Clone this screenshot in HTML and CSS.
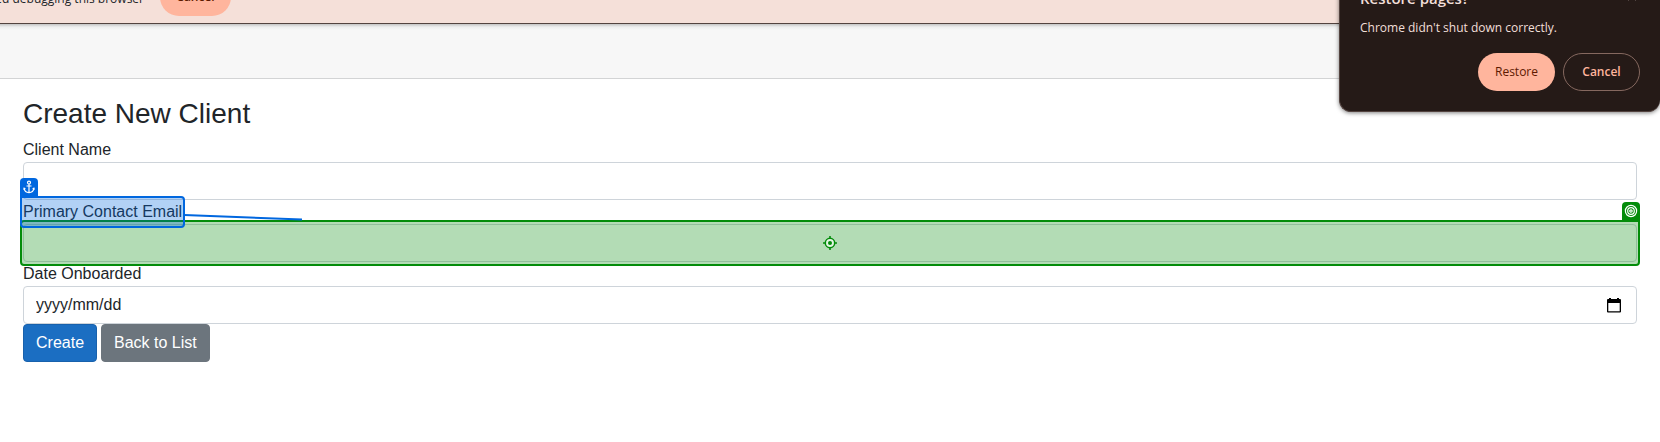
FILE: index.html
```html
<!DOCTYPE html>
<html lang="en">
<head>
<meta charset="utf-8">
<title>Create New Client</title>
<link rel="stylesheet" href="styles.css">
</head>
<body>
<div class="infobar">
  <p class="infobar-text"><span>started debugging this browser</span></p>
  <button class="pill pill-filled infobar-cancel" type="button">Cancel</button>
</div>
<header class="navbar"></header>
<main class="page">
  <h1 class="title">Create New Client</h1>
  <form class="form">
    <div class="field">
      <label class="label" for="name">Client Name</label>
      <input class="control" id="name" type="text">
    </div>
    <div class="field">
      <label class="label anchor-label" for="email">Primary Contact Email
        <span class="anchor-box"></span>
        <span class="badge anchor-badge"><svg viewBox="0 0 18 18" width="18" height="18" fill="none" stroke="currentColor" stroke-width="1.2"><circle cx="9" cy="4.6" r="1.5"/><path d="M9 6.2V14.6M6.500 8H11.500M4 10.200C4.400 13 6.200 14.600 9 14.600S13.600 13 14 10.200M3.600 11.600L4.100 10.200L5.400 11M14.400 11.600L13.900 10.200L12.600 11"/></svg></span>
        <svg class="connector" viewBox="0 0 120 8" width="120" height="8"><path d="M0 2L118 6.500" stroke="currentColor" stroke-width="2"/></svg>
      </label>
      <div class="control-wrap">
        <input class="control" id="email" type="email">
        <div class="target-box"><svg viewBox="0 0 14 14" width="14" height="14"><circle cx="7" cy="7" r="4.700" fill="#e3f4e3" stroke="currentColor" stroke-width="1.500"/><circle cx="7" cy="7" r="2" fill="currentColor"/><path d="M7 0V2.500M7 11.500V14M0 7H2.500M11.500 7H14" stroke="currentColor" stroke-width="1.600"/></svg></div>
        <span class="badge target-badge"><svg viewBox="0 0 18 18" width="18" height="18" fill="none" stroke="currentColor" stroke-width="1.200"><circle cx="9" cy="9" r="5.600"/><circle cx="9" cy="9" r="3.300"/><circle cx="9" cy="9" r="1.200"/></svg></span>
      </div>
    </div>
    <div class="field">
      <label class="label" for="date">Date Onboarded</label>
      <div class="control date-control">
        <input class="date-input" id="date" type="text" placeholder="yyyy/mm/dd">
        <button class="picker" type="button" aria-label="Show date picker"><svg viewBox="0 0 14 15" width="14" height="15"><path d="M2 0H4V1H10V0H12V1H13Q14 1 14 2V13.500Q14 14.500 13 14.500H1Q0 14.500 0 13.500V2Q0 1 1 1H2ZM1.300 5V13.200H12.700V5Z" fill="currentColor" fill-rule="evenodd"/></svg></button>
      </div>
    </div>
    <div class="actions">
      <button class="btn btn-primary" type="button">Create</button>
      <a class="btn btn-secondary" href="#">Back to List</a>
    </div>
  </form>
</main>
<section class="dialog" aria-labelledby="restore-title">
  <div class="dialog-head">
    <h2 class="dialog-title" id="restore-title">Restore pages?</h2>
    <button class="close" type="button" aria-label="Close"><svg viewBox="0 0 10 10" width="10" height="10"><path d="M1 1L9 9M9 1L1 9" stroke="currentColor" stroke-width="1.200"/></svg></button>
  </div>
  <p class="dialog-text">Chrome didn't shut down correctly.</p>
  <div class="dialog-actions">
    <button class="pill pill-filled" type="button">Restore</button>
    <button class="pill pill-outline" type="button">Cancel</button>
  </div>
</section>
</body>
</html>
```
FILE: styles.css
```css
*, *::before, *::after { box-sizing: border-box; }
body {
  margin: 0;
  background: #fff;
  color: #212529;
  font: 16px/24px "Liberation Sans", Arial, sans-serif;
  overflow: hidden;
}
button, input { font: inherit; color: inherit; }
svg { display: block; }

.infobar {
  position: relative;
  display: flex;
  align-items: flex-end;
  gap: 16px;
  height: 24px;
  padding-bottom: 7px;
  overflow: hidden;
  background: #f5e0d9;
  border-bottom: 1px solid #53433f;
  font: 12px/20px "Open Sans", "Noto Sans", sans-serif;
}
.infobar-text {
  display: flex;
  justify-content: flex-end;
  width: 144px;
  margin: 0;
  padding-bottom: 7px;
  white-space: nowrap;
}

.navbar {
  height: 55px;
  background: linear-gradient(#c4c4c4, #eee 3px, #f7f7f7 6px);
  border-bottom: 1px solid #d3d4d5;
}

.page { padding: 18px 23px 24px; }
.title { margin: 0 0 7px; font-size: 28px; line-height: 34px; font-weight: 400; }
.label { display: block; width: max-content; }
.control {
  display: block;
  width: 100%;
  height: 38px;
  padding: 6px 12px;
  background: #fff;
  border: 1px solid #ced4da;
  border-radius: 4px;
}
.control-wrap, .anchor-label { position: relative; }

.badge { position: absolute; width: 18px; height: 18px; color: #fff; }
.anchor-label { z-index: 2; }
.anchor-box {
  position: absolute;
  inset: -4px -3px;
  border: 2px solid #0067df;
  border-radius: 0 4px 4px 4px;
  background: rgba(0, 103, 223, .3);
}
.anchor-badge { left: -3px; top: -22px; background: #0067df; border-radius: 4px 4px 0 0; }
.connector { position: absolute; left: calc(100% + 2px); top: 13px; color: #0067df; }
.target-box {
  position: absolute;
  inset: -4px -3px;
  display: grid;
  place-items: center;
  border: 2px solid #038c0a;
  border-radius: 4px 0 4px 4px;
  background: rgba(3, 140, 10, .3);
  color: #038c0a;
}
.target-badge { right: -3px; top: -22px; background: #038c0a; border-radius: 4px 4px 0 0; }

.date-control { display: flex; align-items: center; justify-content: space-between; padding-right: 15px; }
.date-input { flex: 1; min-width: 0; height: 24px; padding: 0; border: 0; outline: 0; background: transparent; }
.date-input::placeholder { color: #212529; opacity: 1; }
.picker { padding: 0; border: 0; background: transparent; color: #000; }

.actions { display: flex; gap: 4px; }
.btn {
  padding: 6px 12px;
  border: 1px solid;
  border-radius: 4px;
  color: #fff;
  line-height: 24px;
  text-decoration: none;
}
.btn-primary { background: #1b6ec2; border-color: #1861ac; }
.btn-secondary { background: #6c757d; border-color: #6c757d; }

.dialog {
  position: absolute;
  top: -16px;
  right: 0;
  width: 321px;
  padding: 3px 20px 20px;
  background: #251a17;
  border: 1px solid #53433f;
  border-right: 0;
  border-radius: 0 0 12px 12px;
  box-shadow: 0 1px 4px rgba(0, 0, 0, .5);
  color: #f1dfd9;
  font: 12px/20px "Open Sans", "Noto Sans", sans-serif;
}
.dialog-head { display: flex; justify-content: space-between; align-items: flex-start; }
.dialog-title { margin: 0; font-size: 15px; line-height: 20px; font-weight: 600; }
.close { margin: 3px 3px 0 0; padding: 0; border: 0; background: transparent; }
.dialog-text { margin: 10px 0 15px; }
.dialog-actions { display: flex; justify-content: flex-end; gap: 8px; }
.pill {
  width: 77px;
  height: 38px;
  flex-shrink: 0;
  padding: 0;
  border: 0;
  border-radius: 19px;
}
.pill-filled { background: #ffb59d; color: #5d1900; }
.pill-outline { background: transparent; border: 1px solid #85685f; color: #ffb59d; font-weight: 600; }
.infobar-cancel { width: 71px; font-weight: 600; }
```
